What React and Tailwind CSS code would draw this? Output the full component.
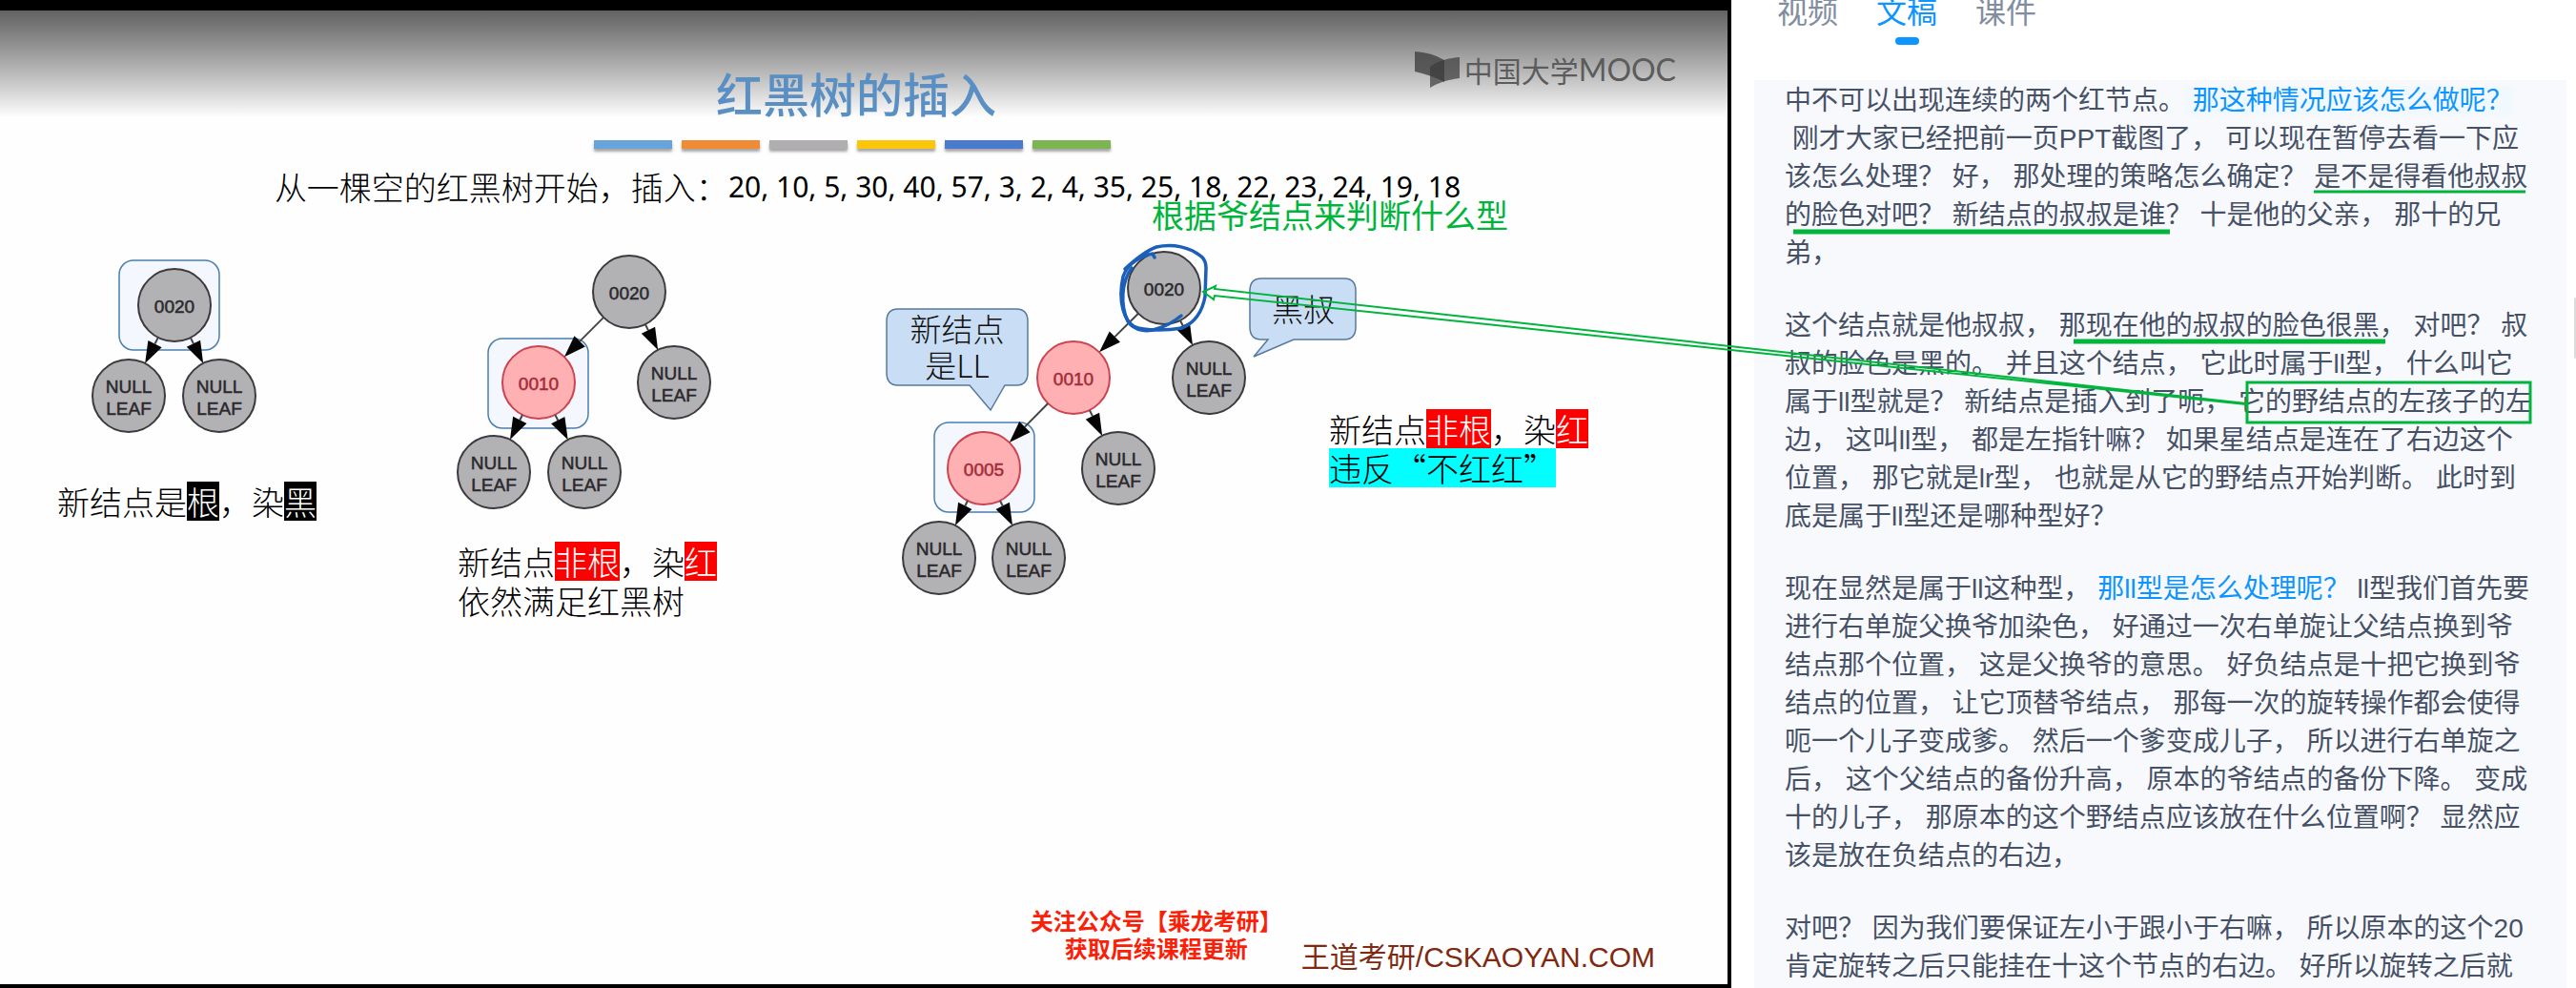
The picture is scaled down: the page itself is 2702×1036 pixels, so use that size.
import React from "react";

const CJK = "font-['Liberation_Sans','Noto_Sans_CJK_SC',sans-serif]";
const SLIDE = "font-['Noto_Sans_CJK_SC',sans-serif] font-light text-[34px] leading-[41px] whitespace-nowrap";

const R = 38;

function Edge({ from, to }) {
  const dx = to[0] - from[0];
  const dy = to[1] - from[1];
  const len = Math.hypot(dx, dy);
  const ux = dx / len;
  const uy = dy / len;
  const tip = [to[0] - ux * R, to[1] - uy * R];
  const base = [tip[0] - ux * 23, tip[1] - uy * 23];
  const head = [
    tip,
    [base[0] - uy * 8, base[1] + ux * 8],
    [base[0] + uy * 8, base[1] - ux * 8],
  ];
  return (
    <g>
      <line
        x1={from[0] + ux * R}
        y1={from[1] + uy * R}
        x2={base[0]}
        y2={base[1]}
        stroke="#444"
        strokeWidth="2"
      />
      <polygon points={head.map((p) => p.join(",")).join(" ")} fill="#050505" />
    </g>
  );
}

function Node({ at, label, red }) {
  const [x, y] = at;
  return (
    <g>
      <circle
        cx={x}
        cy={y}
        r={R}
        fill={red ? "#ffb0b2" : "#b2b1b4"}
        stroke={red ? "#cc4450" : "#3c3a3e"}
        strokeWidth="2"
      />
      <g
        textAnchor="middle"
        fill={red ? "#a02c38" : "#2a282c"}
        stroke={red ? "#a02c38" : "#2a282c"}
        strokeWidth="0.5"
        className="font-['Liberation_Sans',sans-serif] text-[19px]"
      >
        {label ? (
          <text x={x} y={y + 8}>{label}</text>
        ) : (
          <>
            <text x={x} y={y - 3}>NULL</text>
            <text x={x} y={y + 20}>LEAF</text>
          </>
        )}
      </g>
    </g>
  );
}

function Frame({ x, y }) {
  return (
    <rect x={x} y={y} width="105" height="94" rx="15" fill="#f4f7fe" stroke="#4a7fae" strokeWidth="1.5" />
  );
}

function Tree({ viewBox, width, height, nodes, edges, frame, children }) {
  return (
    <svg viewBox={viewBox} width={width} height={height} className="block overflow-visible">
      <Frame {...frame} />
      {nodes.map((n, i) => (
        <Node key={i} {...n} />
      ))}
      {edges.map(([a, b], i) => (
        <Edge key={i} from={nodes[a].at} to={nodes[b].at} />
      ))}
      {children}
    </svg>
  );
}

const Mark = ({ children }) => <span className="inline-block bg-[#fe0000] text-white">{children}</span>;
const Ink = ({ children }) => <span className="inline-block bg-black text-white">{children}</span>;
const Blue = ({ children }) => <span className="text-[#0c94ff]">{children}</span>;

function MoocLogo() {
  return (
    <div className="absolute top-[42px] right-[54px] flex items-center gap-1 text-[#5c5c5c]">
      <svg width="48" height="40" viewBox="0 0 48 40">
        <path d="M0 1 Q18 2 31 10 V33 Q18 26 0 22Z" fill="#3a3a3a" fillOpacity="0.75" />
        <path d="M16 17 Q28 8 47 7 V29 Q28 31 16 39Z" fill="#3a3a3a" fillOpacity="0.7" />
      </svg>
      <div className="flex items-center whitespace-nowrap font-['Noto_Sans_CJK_SC',sans-serif]">
        <span className="text-[30px] leading-10">中国大学</span>
        <span className="font-['Lato',sans-serif] text-[32px] leading-10">MOOC</span>
      </div>
    </div>
  );
}

function Slide() {
  return (
    <section className="relative flex min-w-0 flex-1 flex-col border-t-[11px] border-r-4 border-b-4 border-black bg-[#fefefe]">
      <div className="absolute inset-x-0 top-0 h-[112px] bg-linear-to-b from-[#626262] via-[#acacac] to-[#fefefe]" />
      <MoocLogo />

      <header className="relative flex flex-col items-center pt-[62px]">
        <h1 className="mr-4 font-['Noto_Sans_CJK_SC',sans-serif] text-[49px] leading-12 font-medium text-[#5a8fc3]">红黑树的插入</h1>
        <div className="mt-[26px] mr-6 flex gap-[10px]">
          <span className="h-[9px] w-[82px] bg-[#68a4da] shadow-[0_3px_3px_rgba(0,0,0,0.35)]" />
          <span className="h-[9px] w-[82px] bg-[#ef8a35] shadow-[0_3px_3px_rgba(0,0,0,0.35)]" />
          <span className="h-[9px] w-[82px] bg-[#b0aeb1] shadow-[0_3px_3px_rgba(0,0,0,0.35)]" />
          <span className="h-[9px] w-[82px] bg-[#fcc60a] shadow-[0_3px_3px_rgba(0,0,0,0.35)]" />
          <span className="h-[9px] w-[82px] bg-[#4a7acb] shadow-[0_3px_3px_rgba(0,0,0,0.35)]" />
          <span className="h-[9px] w-[82px] bg-[#7cb552] shadow-[0_3px_3px_rgba(0,0,0,0.35)]" />
        </div>
        <p className="mt-5 ml-2 flex items-center leading-10 whitespace-nowrap text-black">
          <span className="font-['Noto_Sans_CJK_SC',sans-serif] text-[34px] font-light">从一棵空的红黑树开始，插入：</span>
          <span className="font-['Noto_Sans',sans-serif] text-[30px]">
            20, 10, 5, 30, 40, 57, 3, 2, 4, 35, 25, 18, 22, 23, 24, 19, 18
          </span>
        </p>
      </header>

      <div className="relative mt-8 flex items-start text-black">
        <figure className="ml-[60px] w-[272px] shrink-0">
          <Tree
            viewBox="60 248 272 240"
            width="272"
            height="240"
            nodes={[
              { at: [183, 320], label: "0020" },
              { at: [135, 415] },
              { at: [230, 415] },
            ]}
            edges={[[0, 1], [0, 2]]}
            frame={{ x: 125, y: 273 }}
          />
          <figcaption className={`mt-[17px] ${SLIDE}`}>
            新结点是<Ink>根</Ink>，染<Ink>黑</Ink>
          </figcaption>
        </figure>

        <figure className="ml-[148px] w-[272px] shrink-0">
          <Tree
            viewBox="480 248 272 300"
            width="272"
            height="300"
            nodes={[
              { at: [660, 306], label: "0020" },
              { at: [565, 401], label: "0010", red: true },
              { at: [707, 401] },
              { at: [518, 495] },
              { at: [613, 495] },
            ]}
            edges={[[0, 1], [0, 2], [1, 3], [1, 4]]}
            frame={{ x: 512, y: 355 }}
          />
          <figcaption className={`mt-5 ${SLIDE}`}>
            新结点<Mark>非根</Mark>，染<Mark>红</Mark>
            <br />
            依然满足红黑树
          </figcaption>
        </figure>

        <figure className="ml-[158px] flex shrink-0 items-start">
          <Tree
            viewBox="910 248 484 400"
            width="484"
            height="400"
            nodes={[
              { at: [1221, 302], label: "0020" },
              { at: [1126, 396], label: "0010", red: true },
              { at: [1268, 396] },
              { at: [1032, 491], label: "0005", red: true },
              { at: [1173, 491] },
              { at: [985, 585] },
              { at: [1079, 585] },
            ]}
            edges={[[0, 1], [0, 2], [1, 3], [1, 4], [3, 5], [3, 6]]}
            frame={{ x: 980, y: 443 }}
          >
            <g fill="#c9def5" stroke="#56799f" strokeWidth="1.5">
              <path d="M942 324H1066Q1078 324 1078 337V391Q1078 404 1066 404H1054L1039 430L1017 404H942Q930 404 930 391V337Q930 324 942 324Z" />
              <path d="M1323 292H1410Q1422 292 1422 305V343Q1422 356 1410 356H1357L1315 374L1330 356H1323Q1311 356 1311 343V305Q1311 292 1323 292Z" />
            </g>
            <g textAnchor="middle" fill="#111" className="font-['Noto_Sans_CJK_SC',sans-serif] text-[33px] font-light">
              <text x="1004" y="358">新结点</text>
              <text x="1004" y="396">是LL</text>
              <text x="1367" y="337">黑叔</text>
            </g>
            <g fill="none" stroke="#1c5fb8" strokeLinecap="round" strokeLinejoin="round" strokeWidth="3.5">
              <path d="M1211 270 L1209 266 C1199 268 1183 275 1178 290 C1172 318 1180 336 1189 342 C1201 348 1228 346 1240 344 C1256 337 1262 322 1264 311 L1265 281 C1265 270 1258 267 1251 263 C1240 258 1226 256 1213 259 C1202 263 1191 272 1180 282" />
              <path d="M1187 281 C1176 296 1175 320 1183 337 C1190 347 1203 349 1216 344 C1226 341 1234 335 1239 331" />
            </g>
          </Tree>
          <figcaption className={`mt-[181px] ${SLIDE}`}>
            新结点<Mark>非根</Mark>，染<Mark>红</Mark>
            <br />
            <span className="inline-block bg-[#02feff]">违反“不红红”</span>
          </figcaption>
        </figure>
      </div>

      <footer className="relative mt-auto flex items-end justify-end gap-5 pr-[76px] pb-2 whitespace-nowrap">
        <p className="mb-4 text-center font-['Noto_Sans_CJK_SC',sans-serif] text-2xl leading-[29px] font-bold text-[#fa2008]">
          关注公众号【乘龙考研】
          <br />
          获取后续课程更新
        </p>
        <p className={`${CJK} text-[30px] leading-10 text-[#7e2a12]`}>王道考研/CSKAOYAN.COM</p>
      </footer>
    </section>
  );
}

function Transcript() {
  return (
    <aside className={`flex w-[886px] shrink-0 flex-col bg-white ${CJK}`}>
      <nav className="flex h-[84px] shrink-0 items-start gap-10 pl-12 text-[32px] leading-10 text-[#828da0]">
        <button type="button" className="-mt-[7px]">视频</button>
        <button type="button" className="-mt-[7px] flex flex-col items-center text-[#0c94ff]">
          文稿
          <span className="mt-[6px] h-2 w-[25px] rounded-full bg-[#0c94ff]" />
        </button>
        <button type="button" className="-mt-[7px]">课件</button>
      </nav>
      <div className="flex min-h-0 flex-1 pr-[10px] pl-6">
        <div className="h-full flex-1 space-y-9 bg-[#f8f9fd] px-8 pt-[2px] text-[28px] leading-10 text-[#465166]">
          <p>
            中不可以出现连续的两个红节点。<span className="bg-[#f1f9ff]"> <Blue>那这种情况应该怎么做呢？</Blue></span>
            <wbr />&nbsp;刚才大家已经把前一页PPT截图了， 可以现在暂停去看一下应该怎么处理？ 好， 那处理的策略怎么确定？ 是不是得看他叔叔的脸色对吧？ 新结点的叔叔是谁？ 十是他的父亲， 那十的兄弟，
          </p>
          <p>
            这个结点就是他叔叔， 那现在他的叔叔的脸色很黑， 对吧？ 叔叔的脸色是黑的。 并且这个结点， 它此时属于ll型， 什么叫它属于ll型就是？ 新结点是插入到了呃， 它的野结点的左孩子的左边， 这叫ll型， 都是左指针嘛？ 如果星结点是连在了右边这个位置， 那它就是lr型， 也就是从它的野结点开始判断。 此时到底是属于ll型还是哪种型好？
          </p>
          <p>
            现在显然是属于ll这种型， <Blue>那ll型是怎么处理呢？</Blue> ll型我们首先要进行右单旋父换爷加染色， 好通过一次右单旋让父结点换到爷结点那个位置， 这是父换爷的意思。 好负结点是十把它换到爷结点的位置， 让它顶替爷结点， 那每一次的旋转操作都会使得呃一个儿子变成爹。 然后一个爹变成儿子， 所以进行右单旋之后， 这个父结点的备份升高， 原本的爷结点的备份下降。 变成十的儿子， 那原本的这个野结点应该放在什么位置啊？ 显然应该是放在负结点的右边，
          </p>
          <p>
            对吧？ 因为我们要保证左小于跟小于右嘛， 所以原本的这个20肯定旋转之后只能挂在十这个节点的右边。 好所以旋转之后就
          </p>
        </div>
      </div>
    </aside>
  );
}

function Annotations() {
  return (
    <svg
      width="2702"
      height="520"
      viewBox="0 0 2702 520"
      className="pointer-events-none absolute top-0 left-0"
      fill="none"
      stroke="#00b43c"
    >
      <path d="M2356 423L1274 303L1275 300L1262 306L1273 314L1274 310L2356 424" strokeWidth="2" />
      <rect x="2357" y="401" width="297" height="42" strokeWidth="3" />
      <path d="M2427 201H2649" strokeWidth="3" />
      <path d="M1881 243H2276M2175 358H2502" strokeWidth="5" />
      <text x="1208" y="239" fill="#00b43c" stroke="none" className="font-['Noto_Sans_CJK_SC',sans-serif] text-[34px]">
        根据爷结点来判断什么型
      </text>
    </svg>
  );
}

export default function App() {
  return (
    <main lang="zh-CN" className="relative flex h-screen overflow-hidden">
      <Slide />
      <Transcript />
      <div className="absolute top-[312px] right-0 h-16 w-[2px] rounded-l bg-[#dcdcdc]" />
      <Annotations />
    </main>
  );
}
